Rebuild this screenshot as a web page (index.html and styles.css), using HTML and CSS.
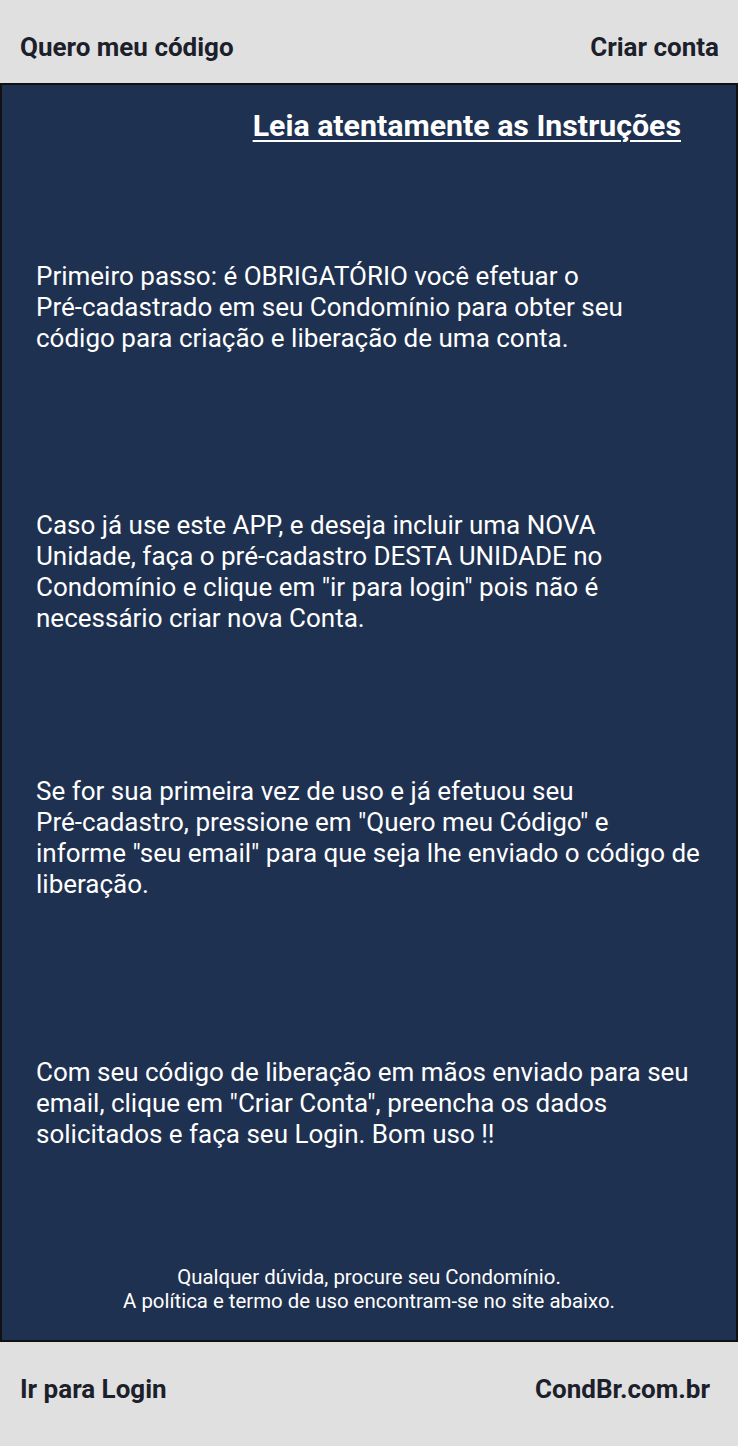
FILE: index.html
```
<!DOCTYPE html>
<html lang="pt-BR">
<head>
    <meta charset="UTF-8">
    <meta name="viewport" content="width=device-width, initial-scale=1.0">
    <title>CondBr - Instruções</title>
    <link rel="stylesheet" href="styles.css">
</head>
<body>
    <div class="screen">
        <div class="top-bar">
            <a class="bar-link">Quero meu código</a>
            <a class="bar-link">Criar conta</a>
        </div>

        <div class="panel">
            <h1 class="title">Leia atentamente as Instruções</h1>

            <!-- quebras de linha fixas para ficar igual ao app -->
            <p class="step step-1">Primeiro passo: é OBRIGATÓRIO você efetuar o<br>Pré-cadastrado em seu Condomínio para obter seu<br>código para criação e liberação de uma conta.</p>

            <p class="step step-2">Caso já use este APP, e deseja incluir uma NOVA<br>Unidade, faça o pré-cadastro DESTA UNIDADE no<br>Condomínio e clique em "ir para login" pois não é<br>necessário criar nova Conta.</p>

            <p class="step step-3">Se for sua primeira vez de uso e já efetuou seu<br>Pré-cadastro, pressione em "Quero meu Código" e<br>informe "seu email" para que seja lhe enviado o código de<br>liberação.</p>

            <p class="step step-4">Com seu código de liberação em mãos enviado para seu<br>email, clique em "Criar Conta", preencha os dados<br>solicitados e faça seu Login. Bom uso !!</p>

            <div class="note">
                Qualquer dúvida, procure seu Condomínio.<br>
                A política e termo de uso encontram-se no site abaixo.
            </div>
        </div>

        <div class="bottom-bar">
            <a class="bar-link">Ir para Login</a>
            <a class="bar-link">CondBr.com.br</a>
        </div>
    </div>
</body>
</html>
```

FILE: styles.css
```
body {
    margin: 0;
    font-family: Roboto, 'Noto Sans', sans-serif;
    background: #e0e0e0;
}

.screen {
    display: flex;
    flex-direction: column;
    height: 1446px;
}

.top-bar {
    height: 83px;
    display: flex;
    justify-content: space-between;
    align-items: center;
    padding: 10px 19px 0 20px;
    box-sizing: border-box;
    background: #e0e0e0;
}

.bar-link {
    color: #1b202b;
    font-size: 26px;
    font-weight: 700;
}

.panel {
    flex: 1;
    display: flex;
    flex-direction: column;
    background: #1f3150;
    border: 2px solid #111;
    color: #fff;
    padding: 0 30px 0 34px;
}

.title {
    margin: 22px 0 0 0;
    text-align: right;
    padding-right: 25px;
    font-size: 30.3px;
    font-weight: 700;
    text-decoration: underline;
    text-decoration-thickness: 2px;
    text-underline-offset: 4px;
    line-height: 38px;
}

.step {
    margin: 0;
    font-size: 26px;
    line-height: 31px;
    white-space: nowrap;
}

.step-1 { margin-top: 116px; }
.step-2 { margin-top: 156px; }
.step-3 { margin-top: 142px; }
.step-4 { margin-top: 157px; }

.note {
    margin-top: auto;
    margin-bottom: 27px;
    padding-right: 4px;
    text-align: center;
    font-size: 20.4px;
    line-height: 24px;
}

.bottom-bar {
    height: 104px;
    display: flex;
    justify-content: space-between;
    align-items: center;
    padding: 0 28px 10px 20px;
    box-sizing: border-box;
    background: #e0e0e0;
}
```
